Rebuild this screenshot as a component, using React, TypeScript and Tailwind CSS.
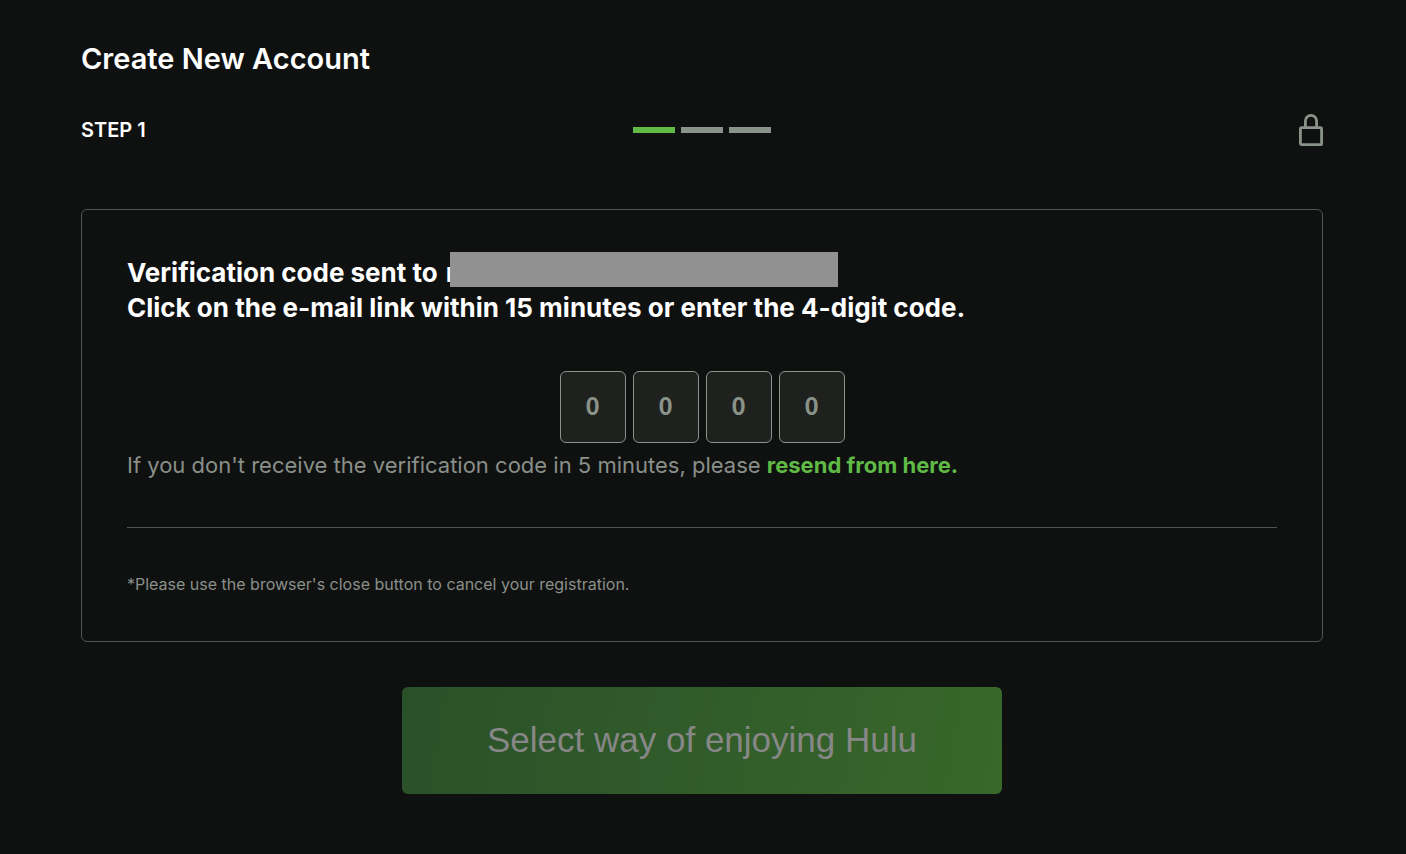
const digits = [1, 2, 3, 4];

export default function App() {
  return (
    <main className="min-h-screen bg-[#0f1110] pt-10 pr-[83px] pb-[60px] pl-[81px] font-['Inter','Noto_Sans_CJK_JP',sans-serif] text-white antialiased">
      <h1 className="text-[29px] leading-[38px] font-semibold">Create New Account</h1>
      <header className="mt-[35px] grid grid-cols-3 items-center">
        <p className="text-[20px] leading-8 font-semibold">STEP 1</p>
        <div className="flex justify-center gap-[6px]">
          <span className="h-[6px] w-[42px] bg-[#5fba46]" />
          <span className="h-[6px] w-[42px] bg-[#8a9389]" />
          <span className="h-[6px] w-[42px] bg-[#8a9389]" />
        </div>
        <svg className="justify-self-end" width="24" height="34" viewBox="0 0 24 34" fill="none" stroke="#8a9389" strokeWidth="2.8" aria-hidden="true">
          <rect x="1.4" y="14.6" width="21.2" height="17" rx="1.2" />
          <path d="M6.4 14.6V8a5.6 5.6 0 0 1 11.2 0v6.6" />
        </svg>
      </header>
      <section className="mt-[62px] rounded-md border border-[#525452] px-[45px] py-[45px]">
        <h2 className="text-[26px] leading-[35px] font-bold">
          <span className="flex items-start gap-2">
            <span>Verification code sent to</span>
            <span className="relative h-[35px] w-[392px]">
              r
              <span className="absolute -top-[3px] right-0 h-[35px] w-[388px] bg-[#919191]" />
            </span>
          </span>
          Click on the e-mail link within 15 minutes or enter the 4-digit code.
        </h2>
        <form className="mt-[46px] flex justify-center gap-[7px]">
          {digits.map((d) => (
            <input key={d} aria-label={"Digit " + d} placeholder="0" maxLength={1} className="h-[72px] w-[66px] rounded-md border border-[#8a9389] bg-[#1f211e] pb-[6px] text-center font-['Noto_Sans_CJK_JP',sans-serif] text-[24px] font-bold placeholder:text-[#8a9389]" />
          ))}
        </form>
        <p className="mt-1 text-[22px] leading-9 text-[#8a8f89]">
          If you don't receive the verification code in 5 minutes, please{" "}
          <a href="#resend" className="font-bold text-[#5fba46]">resend from here.</a>
        </p>
        <hr className="mt-11 border-[#525452]" />
        <p className="mt-11 text-[16px] leading-6 text-[#8a8f89]">*Please use the browser's close button to cancel your registration.</p>
      </section>
      <button className="mx-auto mt-[45px] block h-[107px] w-[600px] rounded-md bg-linear-100 from-[#2a5029] to-[#38682a] font-['Liberation_Sans',sans-serif] text-[35px] text-[#878787]">Select way of enjoying Hulu</button>
    </main>
  );
}
